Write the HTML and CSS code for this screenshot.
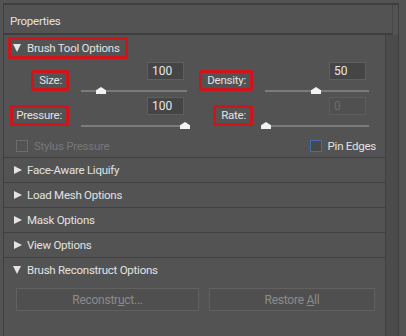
FILE: index.html
```html
<!DOCTYPE html>
<html>
<head>
<meta charset="utf-8">
<link rel="stylesheet" href="styles.css">
</head>
<body>
<div class="window">
  <div class="header">Properties</div>
  <div class="body">
    <div class="main">
      <div class="sec-head hl-row">
        <span class="hl"><span class="arrow down"></span>Brush Tool Options</span>
      </div>
      <div class="opts">
        <div class="grid">
          <span class="label hl lab-size">Size:</span>
          <div class="ctrl">
            <div class="num">100</div>
            <div class="slider"><div class="track"></div><div class="thumb" style="left:20px"></div></div>
          </div>
          <span class="label hl lab-density">Density:</span>
          <div class="ctrl">
            <div class="num">50</div>
            <div class="slider"><div class="track"></div><div class="thumb" style="left:51px"></div></div>
          </div>
          <span class="label hl lab-pressure">Pressure:</span>
          <div class="ctrl">
            <div class="num">100</div>
            <div class="slider"><div class="track"></div><div class="thumb" style="left:104px"></div></div>
          </div>
          <span class="label hl lab-rate">Rate:</span>
          <div class="ctrl">
            <div class="num disabled">0</div>
            <div class="slider"><div class="track"></div><div class="thumb" style="left:1px"></div></div>
          </div>
        </div>
        <div class="checks">
          <label class="check disabled"><span class="box"></span>Stylus Pressure</label>
          <label class="check pin"><span class="box blue"></span>Pin Edges</label>
        </div>
      </div>
      <div class="sec-head"><span class="arrow right"></span>Face-Aware Liquify</div>
      <div class="sec-head"><span class="arrow right"></span>Load Mesh Options</div>
      <div class="sec-head"><span class="arrow right"></span>Mask Options</div>
      <div class="sec-head"><span class="arrow right"></span>View Options</div>
      <div class="sec-head noborder"><span class="arrow down"></span>Brush Reconstruct Options</div>
      <div class="buttons">
        <div class="btn btn-rec"><span>Reconstr<u>u</u>ct...</span></div>
        <div class="btn btn-all"><span>Restore <u>A</u>ll</span></div>
      </div>
    </div>
    <div class="scroll"></div>
  </div>
</div>
</body>
</html>
```
FILE: styles.css
```css
html, body {
  margin: 0;
  padding: 0;
}
body {
  width: 406px;
  height: 336px;
  overflow: hidden;
  background: #535353;
  font-family: Roboto, "Open Sans", sans-serif;
  font-size: 11.5px;
  letter-spacing: -0.25px;
  color: #e2e2e2;
}
.window {
  margin: 3px 7px 0 3px;
  height: 333px;
  border-top: 2px solid #3e3e3e;
  border-left: 1px solid #3e3e3e;
  border-right: 1px solid #3e3e3e;
  display: flex;
  flex-direction: column;
}
.header {
  height: 30px;
  flex: none;
  box-sizing: border-box;
  display: flex;
  align-items: center;
  padding: 3px 0 0 6px;
  border-bottom: 2px solid #3e3e3e;
  margin-right: 5px;
  border-right: 1px solid #464646;
}
.body {
  flex: 1;
  display: flex;
}
.main {
  width: 382px;
  border-right: 1px solid #404040;
}
.scroll {
  width: 12px;
  background: #4b4b4b;
}
.sec-head {
  height: 24px;
  display: flex;
  align-items: center;
  padding-left: 9px;
  border-bottom: 1px solid #404040;
}
.sec-head.noborder {
  border-bottom: none;
}
.sec-head.hl-row {
  height: 25px;
  padding-left: 4px;
  border-bottom: none;
}
.arrow {
  width: 0;
  height: 0;
  margin-right: 6px;
  flex: none;
}
.arrow.right {
  border-top: 4.5px solid transparent;
  border-bottom: 4.5px solid transparent;
  border-left: 8px solid #e4e4e4;
  margin-left: 1px;
  margin-right: 5px;
}
.arrow.down {
  border-left: 4.5px solid transparent;
  border-right: 4.5px solid transparent;
  border-top: 8px solid #e4e4e4;
}
.hl {
  border: 3px solid #d0141b;
  border-radius: 2px;
}
.hl-row .hl {
  display: inline-flex;
  align-items: center;
  height: 16px;
  padding: 0 5px 0 2px;
}
.opts {
  border-bottom: 1px solid #404040;
  height: 98px;
  box-sizing: border-box;
  padding-top: 2px;
}
.grid {
  display: grid;
  grid-template-columns: 73px 106px 78px 104px;
  padding-left: 4px;
}
.label {
  justify-self: end;
  align-self: end;
  margin-bottom: 6px;
  margin-right: 12px;
  padding: 0 4px 0 5px;
  height: 15px;
  line-height: 15px;
}
.lab-pressure {
  padding-left: 3px;
}
.ctrl {
  display: flex;
  flex-direction: column;
}
.num {
  align-self: flex-end;
  margin-right: 3px;
  width: 37px;
  height: 18px;
  box-sizing: border-box;
  background: #454545;
  border: 1px solid #5f5f5f;
  padding-left: 4px;
  line-height: 16px;
  font-size: 12px;
  letter-spacing: 0;
  color: #e8e8e8;
}
.num.disabled {
  background: #505050;
  border-color: #5c5c5c;
  color: #6c6c6c;
}
.slider {
  position: relative;
  height: 17px;
}
.track {
  position: absolute;
  left: 0;
  right: 0;
  top: 10px;
  height: 2px;
  background: #7b7b7b;
}
.thumb {
  position: absolute;
  top: 7px;
  width: 10px;
  height: 7px;
  margin-left: -5px;
  background: #f2f2f2;
  clip-path: polygon(50% 0, 100% 45%, 100% 100%, 0 100%, 0 45%);
}
.checks {
  display: flex;
  justify-content: space-between;
  padding: 8px 9px 0 12px;
}
.check {
  display: flex;
  align-items: center;
  height: 12px;
}
.check .box {
  width: 10px;
  height: 10px;
  border: 1px solid #6c6c6c;
  margin-right: 6px;
}
.check.disabled {
  color: #767676;
}
.check .box.blue {
  border-color: #3f6db0;
  background: #484848;
}
.buttons {
  display: flex;
  padding: 6px 0 0 12px;
  gap: 10px;
}
.btn {
  height: 23px;
  box-sizing: border-box;
  border: 1px solid #606060;
  background: #4f4f4f;
  color: #8c8c8c;
  display: flex;
  align-items: center;
  justify-content: center;
  font-size: 12px;
}
.btn-rec {
  width: 183px;
}
.btn-all {
  width: 166px;
}
```
